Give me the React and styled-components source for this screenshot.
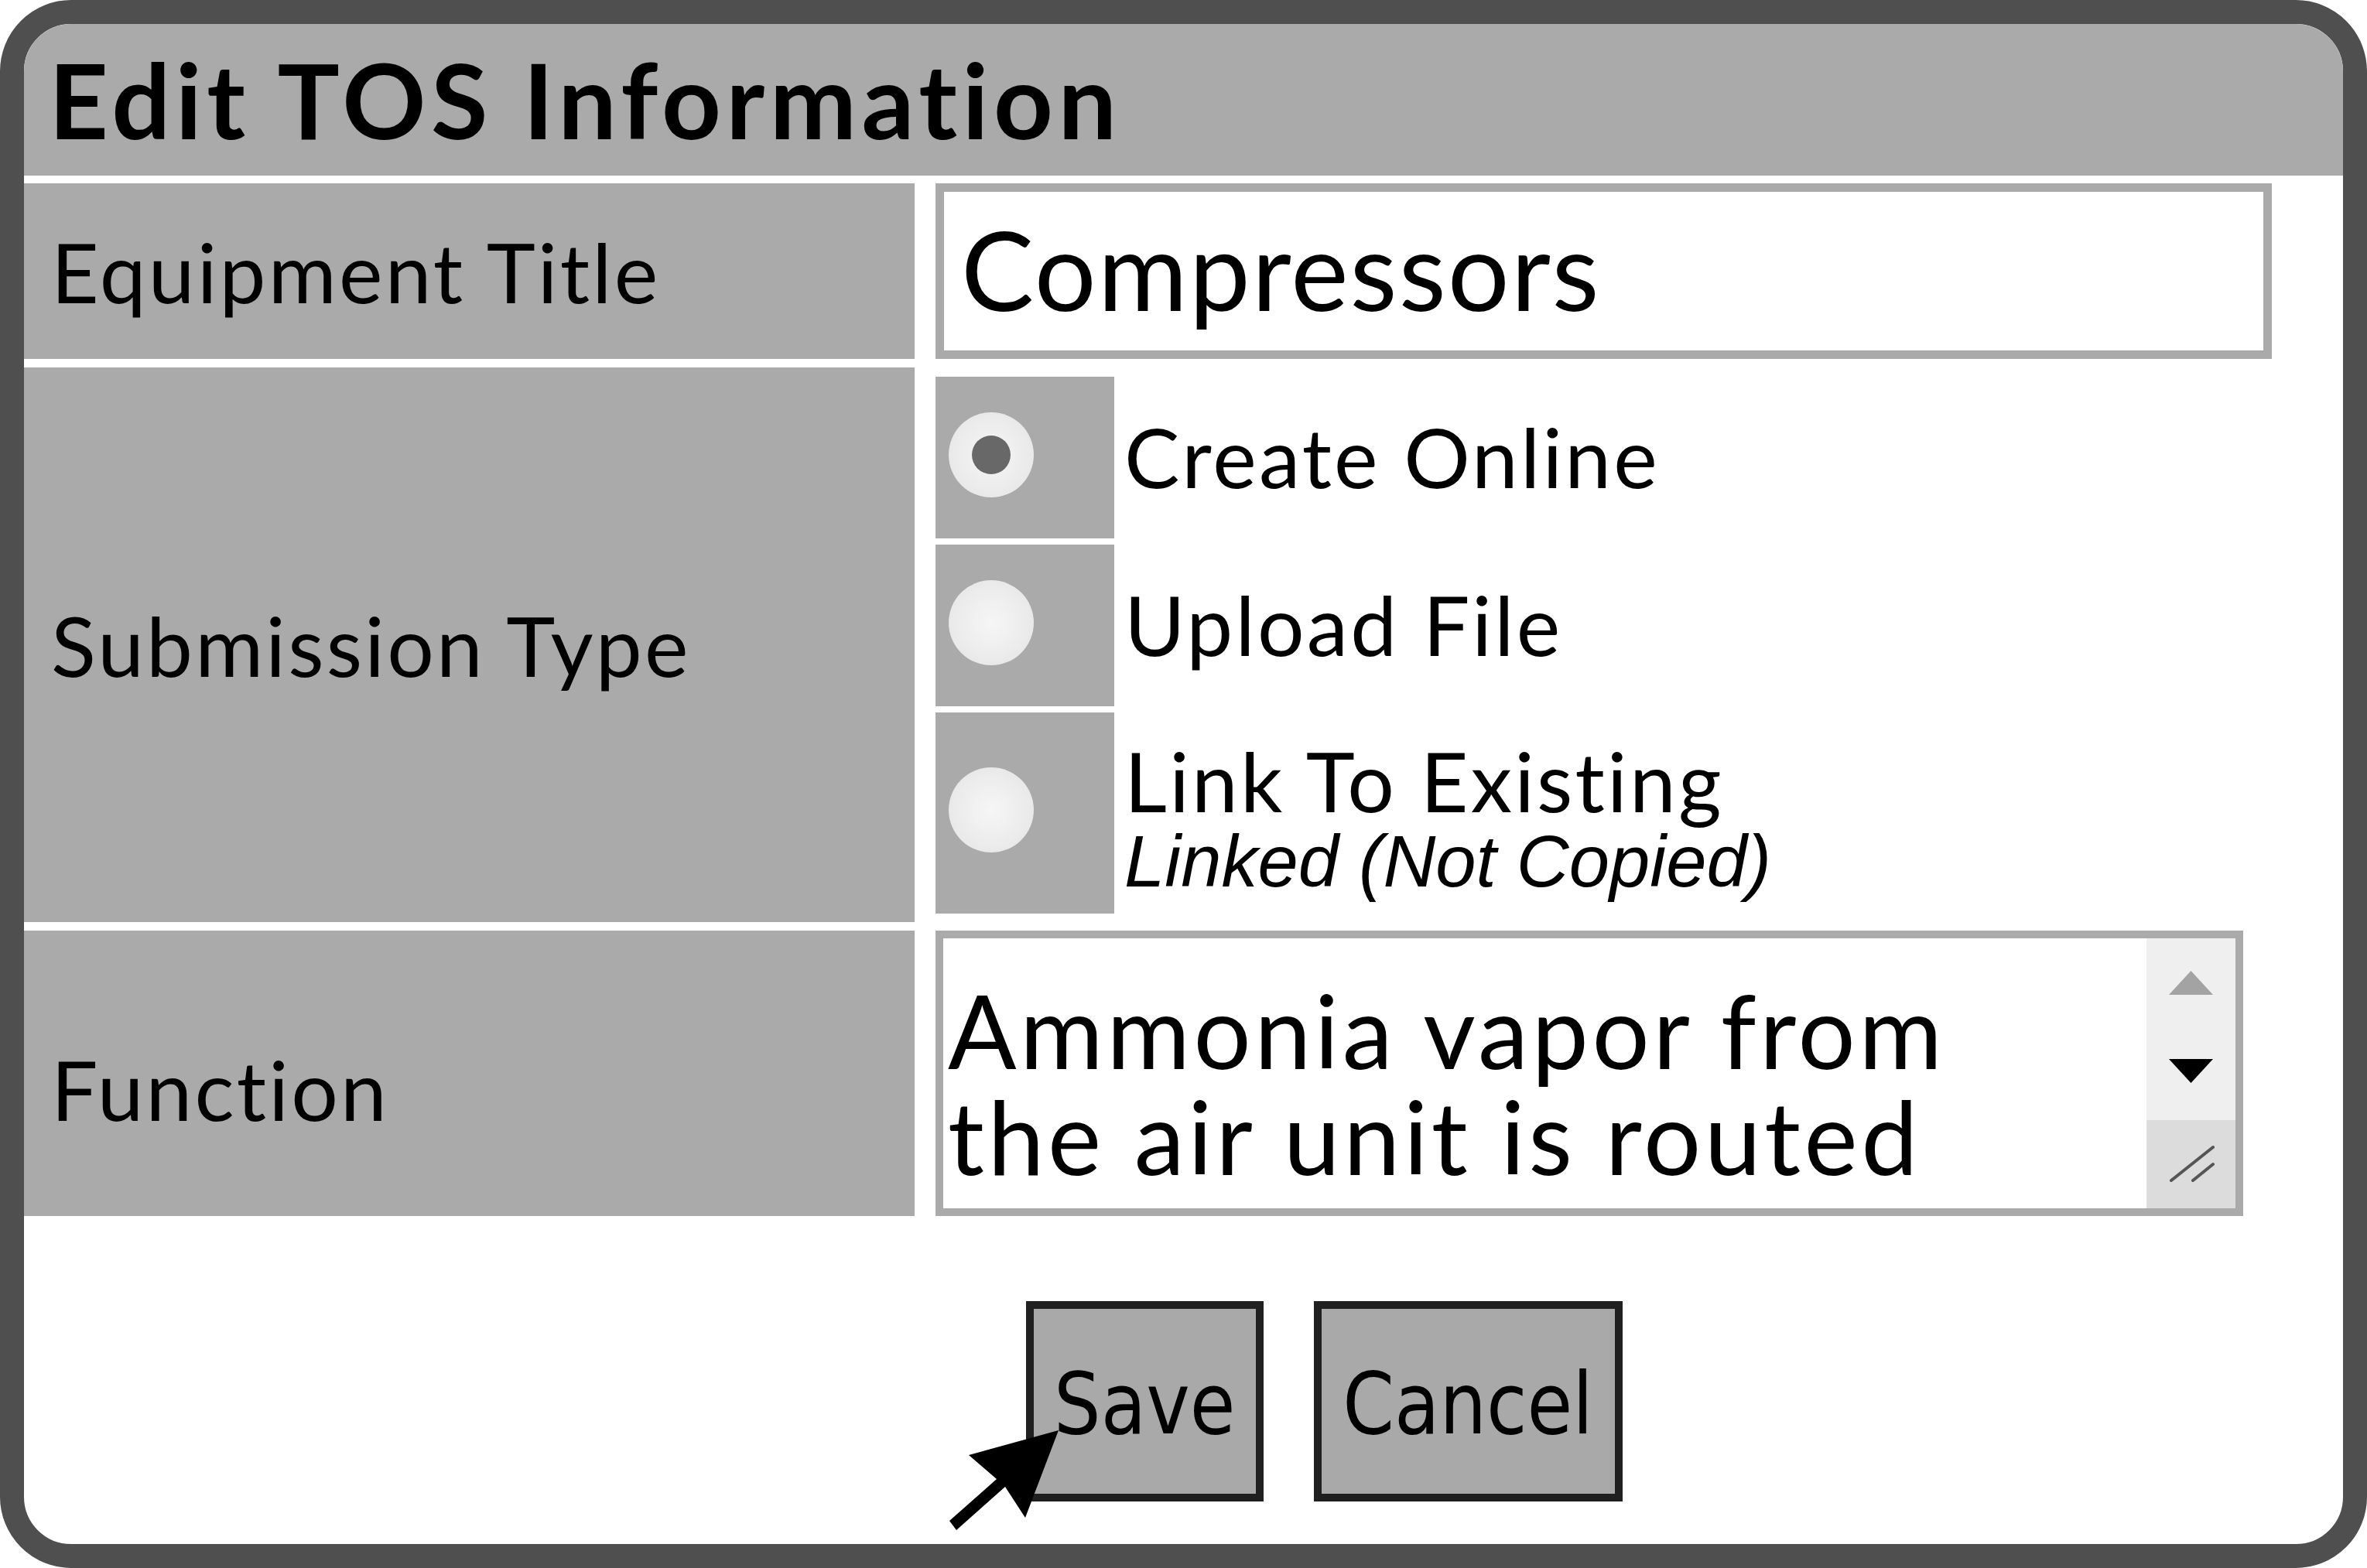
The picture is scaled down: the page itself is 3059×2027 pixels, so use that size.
import React from "react";
import styled, { createGlobalStyle } from "styled-components";

const Global = createGlobalStyle`
  html, body { margin: 0; padding: 0; background: #ffffff; overflow: hidden; }
  * { box-sizing: border-box; }
`;

const Frame = styled.div`
  width: 3059px;
  height: 2027px;
  border: 31px solid #4f4f4f;
  border-radius: 92px;
  overflow: hidden;
  background: #ffffff;
  display: flex;
  flex-direction: column;
  font-family: Lato, "Noto Sans", sans-serif;
  font-variant-ligatures: none;
  font-feature-settings: "liga" 0, "clig" 0;
  color: #000;
`;

const Header = styled.div`
  height: 196px;
  background: #aaaaaa;
  display: flex;
  align-items: center;
  padding-left: 32px;
  flex-shrink: 0;
`;

const Title = styled.h1`
  margin: 0;
  font-size: 134px;
  font-weight: 700;
  line-height: 1;
  letter-spacing: 6.5px;
`;

const FormGrid = styled.div`
  margin-top: 10px;
  display: grid;
  grid-template-columns: 1151px 1fr;
  grid-template-rows: 227px 717px 369px;
  column-gap: 27px;
  row-gap: 11px;
`;

const LabelCell = styled.div`
  background: #aaaaaa;
  display: flex;
  align-items: center;
  padding-left: 35px;
  padding-top: ${(p) => p.$shift || 0}px;
  font-size: 107px;
  line-height: 1;
  letter-spacing: 3.2px;
`;

const TextBox = styled.div`
  width: 1727px;
  height: 227px;
  border: 11px solid #aaaaaa;
  background: #fff;
  display: flex;
  align-items: center;
  padding-left: 22px;
  padding-bottom: 6px;
  font-size: 141px;
  line-height: 1;
  letter-spacing: 2px;
`;

const RadioList = styled.div`
  display: flex;
  flex-direction: column;
  gap: 8px;
  padding-top: 12px;
`;

const RadioRow = styled.div`
  display: flex;
  align-items: stretch;
  height: ${(p) => p.$h}px;
`;

const RadioCell = styled.div`
  width: 231px;
  flex-shrink: 0;
  background: #aaaaaa;
  display: flex;
  align-items: center;
  padding-left: 17px;
  padding-bottom: 8px;
`;

const RadioCircle = styled.div`
  width: 110px;
  height: 110px;
  border-radius: 50%;
  background: radial-gradient(circle at 50% 50%, #f6f6f6 0%, #ececed 55%, #e1e2e4 100%);
  display: flex;
  align-items: center;
  justify-content: center;
  &::after {
    content: "";
    display: ${(p) => (p.$checked ? "block" : "none")};
    width: 50px;
    height: 50px;
    border-radius: 50%;
    background: #686868;
  }
`;

const RadioText = styled.div`
  display: flex;
  flex-direction: column;
  justify-content: center;
  padding-left: 13px;
  padding-top: ${(p) => p.$pt || 0}px;
  padding-bottom: ${(p) => p.$pb || 0}px;
`;

const OptionLabel = styled.div`
  font-size: 107px;
  line-height: 1;
  letter-spacing: 3.2px;
`;

const OptionNote = styled.div`
  font-family: "Liberation Sans", Arial, sans-serif;
  font-style: italic;
  font-size: 94px;
  line-height: 1;
  margin-top: 5px;
`;

const TextAreaBox = styled.div`
  width: 1690px;
  height: 369px;
  border: 10px solid #aaaaaa;
  background: #fff;
  display: flex;
  overflow: hidden;
`;

const TextAreaContent = styled.div`
  flex: 1;
  padding: 50px 0 0 6px;
  font-size: 131px;
  line-height: 137px;
  letter-spacing: 4.5px;
  overflow: hidden;
`;

const ScrollBar = styled.div`
  width: 115px;
  flex-shrink: 0;
  background: #efefef;
  display: flex;
  flex-direction: column;
`;

const ScrollTrack = styled.div`
  flex: 1;
  display: flex;
  flex-direction: column;
  align-items: center;
  padding-top: 42px;
  gap: 83px;
`;

const ResizeCorner = styled.div`
  height: 114px;
  background: #dcdcdc;
  display: flex;
  align-items: center;
  justify-content: center;
`;

const ButtonBar = styled.div`
  display: flex;
  gap: 65px;
  padding-left: 1295px;
  margin-top: 110px;
`;

const ButtonWrap = styled.div`
  position: relative;
`;

const Button = styled.button`
  height: 259px;
  width: ${(p) => p.$w}px;
  border: 10px solid #202020;
  background: #a9a9a9;
  padding: 0;
  margin: 0;
  font-family: "DejaVu Sans", Verdana, sans-serif;
  font-size: 111px;
  color: #000;
  display: flex;
  align-items: center;
  justify-content: center;
  padding-top: 6px;
`;

const ButtonText = styled.span`
  display: inline-block;
  transform: scaleX(0.86);
`;

const Cursor = styled.svg`
  position: absolute;
  left: -110px;
  top: 150px;
  width: 170px;
  height: 160px;
  overflow: visible;
`;

export default function App() {
  return (
    <>
      <Global />
      <Frame>
        <Header>
          <Title>Edit TOS Information</Title>
        </Header>
        <FormGrid>
          <LabelCell>Equipment Title</LabelCell>
          <TextBox>Compressors</TextBox>

          <LabelCell>Submission Type</LabelCell>
          <RadioList>
            <RadioRow $h={209}>
              <RadioCell>
                <RadioCircle $checked />
              </RadioCell>
              <RadioText $pb={4}>
                <OptionLabel>Create Online</OptionLabel>
              </RadioText>
            </RadioRow>
            <RadioRow $h={209}>
              <RadioCell>
                <RadioCircle />
              </RadioCell>
              <RadioText $pb={4}>
                <OptionLabel>Upload File</OptionLabel>
              </RadioText>
            </RadioRow>
            <RadioRow $h={260}>
              <RadioCell>
                <RadioCircle />
              </RadioCell>
              <RadioText $pt={14}>
                <OptionLabel>Link To Existing</OptionLabel>
                <OptionNote>Linked (Not Copied)</OptionNote>
              </RadioText>
            </RadioRow>
          </RadioList>

          <LabelCell $shift={40}>Function</LabelCell>
          <TextAreaBox>
            <TextAreaContent>
              Ammonia vapor from
              <br />
              the air unit is routed
            </TextAreaContent>
            <ScrollBar>
              <ScrollTrack>
                <svg width="57" height="31" viewBox="0 0 57 31">
                  <polygon points="28.5,0 57,31 0,31" fill="#a3a3a3" />
                </svg>
                <svg width="57" height="31" viewBox="0 0 57 31">
                  <polygon points="0,0 57,0 28.5,31" fill="#000" />
                </svg>
              </ScrollTrack>
              <ResizeCorner>
                <svg width="60" height="50" viewBox="0 0 60 50">
                  <line x1="4" y1="46" x2="58" y2="3" stroke="#555" strokeWidth="4" strokeLinecap="round" />
                  <line x1="32" y1="46" x2="58" y2="25" stroke="#555" strokeWidth="4" strokeLinecap="round" />
                </svg>
              </ResizeCorner>
            </ScrollBar>
          </TextAreaBox>
        </FormGrid>

        <ButtonBar>
          <ButtonWrap>
            <Button $w={307}>
              <ButtonText>Save</ButtonText>
            </Button>
            <Cursor viewBox="0 0 170 160">
              <polygon
                points="152,17 36,49 72,80 11,134 20,146 83,90 109,130"
                fill="#000"
              />
            </Cursor>
          </ButtonWrap>
          <ButtonWrap>
            <Button $w={399}>
              <ButtonText>Cancel</ButtonText>
            </Button>
          </ButtonWrap>
        </ButtonBar>
      </Frame>
    </>
  );
}
